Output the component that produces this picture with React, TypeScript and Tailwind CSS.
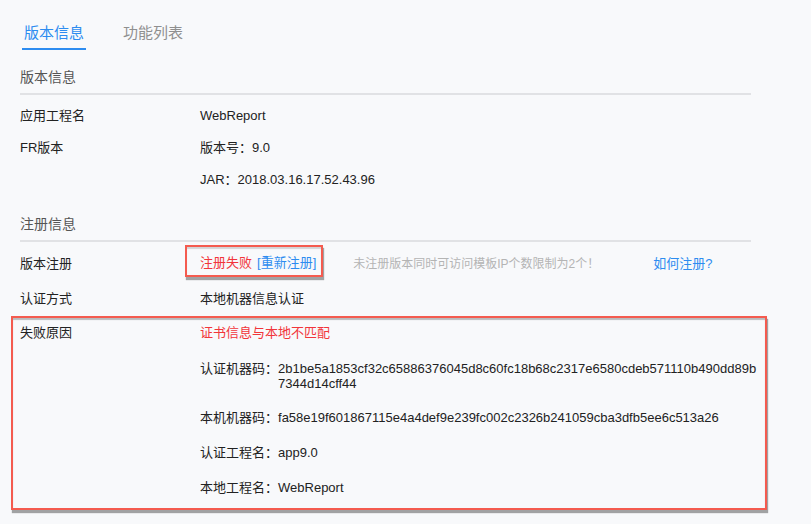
export default function App() {
  const rowsTop = [
    { label: "应用工程名", value: "WebReport" },
    { label: "FR版本", value: "版本号：9.0" },
    { label: "", value: "JAR：2018.03.16.17.52.43.96" },
  ];

  return (
    <div
      className="min-h-[524px] w-[811px] bg-[#f8f9fb] pt-[21px] text-[13px] text-[#222]"
      style={{ fontFamily: '"Liberation Sans", "Noto Sans CJK SC", sans-serif' }}
    >
      {/* tabs */}
      <div className="flex gap-[35px] pl-[22px]">
        <div className="border-b-2 border-[#2d8cf0] px-[2px] pb-[3px] text-[15px] leading-[24px] text-[#2d8cf0]">
          版本信息
        </div>
        <div className="px-[2px] pb-[3px] text-[15px] leading-[24px] text-[#8f8f8f]">功能列表</div>
      </div>

      {/* 版本信息 */}
      <div className="ml-[20px] mt-[17px] w-[731px] border-b-2 border-[#e1e2e5] pb-[6px] text-[14px] leading-[20px] text-[#555]">
        版本信息
      </div>
      <div className="mt-[5px] pl-[20px]">
        {rowsTop.map((r, i) => (
          <div key={i} className="flex py-[6px] leading-[20px]">
            <div className="w-[180px]">{r.label}</div>
            <div>{r.value}</div>
          </div>
        ))}
      </div>

      {/* 注册信息 */}
      <div className="ml-[20px] mt-[18px] w-[731px] border-b-2 border-[#e1e2e5] pb-[6px] text-[14px] leading-[20px] text-[#555]">
        注册信息
      </div>
      <div className="mt-[4px] pl-[20px]">
        <div className="flex h-[35px] items-center">
          <div className="w-[165px]">版本注册</div>
          <div className="-mt-[6px] flex h-[32px] items-center border-2 border-[#f45b4f] pl-[13px] pr-[5px] pt-[5px] shadow-[1px_3px_1px_rgba(0,0,0,0.35),inset_0_2px_1px_rgba(0,0,0,0.15)]">
            <span className="text-[#f2353a]">注册失败</span>
            <span className="ml-[5px] text-[#2d8cf0]">[重新注册]</span>
          </div>
          <div className="ml-[30px] w-[300px] text-[12px] text-[#b4b4b4]">未注册版本同时可访问模板IP个数限制为2个！</div>
          <div className="text-[#2d8cf0]">如何注册?</div>
        </div>
        <div className="flex h-[35px] items-center">
          <div className="w-[180px]">认证方式</div>
          <div>本地机器信息认证</div>
        </div>
      </div>

      {/* 失败原因 */}
      <div className="ml-[11px] flex w-[756px] border-2 border-[#f45b4f] pb-[10px] pl-[7px] pt-[5px] shadow-[1px_3px_1px_rgba(0,0,0,0.35),inset_0_2px_1px_rgba(0,0,0,0.25)]">
        <div className="w-[180px] leading-[20px]">失败原因</div>
        <div className="flex flex-col gap-[15px]">
          <div className="leading-[20px] text-[#f2353a]">证书信息与本地不匹配</div>
          <div className="mb-[2px] flex pt-[3px] leading-[15px]">
            <span className="shrink-0">认证机器码：</span>
            <span className="w-[484px] break-all">
              2b1be5a1853cf32c65886376045d8c60fc18b68c2317e6580cdeb571110b490dd89b7344d14cff44
            </span>
          </div>
          <div className="flex leading-[20px]">
            <span>本机机器码：</span>
            <span>fa58e19f601867115e4a4def9e239fc002c2326b241059cba3dfb5ee6c513a26</span>
          </div>
          <div className="flex leading-[20px]">
            <span>认证工程名：</span>
            <span>app9.0</span>
          </div>
          <div className="flex leading-[20px]">
            <span>本地工程名：</span>
            <span>WebReport</span>
          </div>
        </div>
      </div>
    </div>
  );
}
